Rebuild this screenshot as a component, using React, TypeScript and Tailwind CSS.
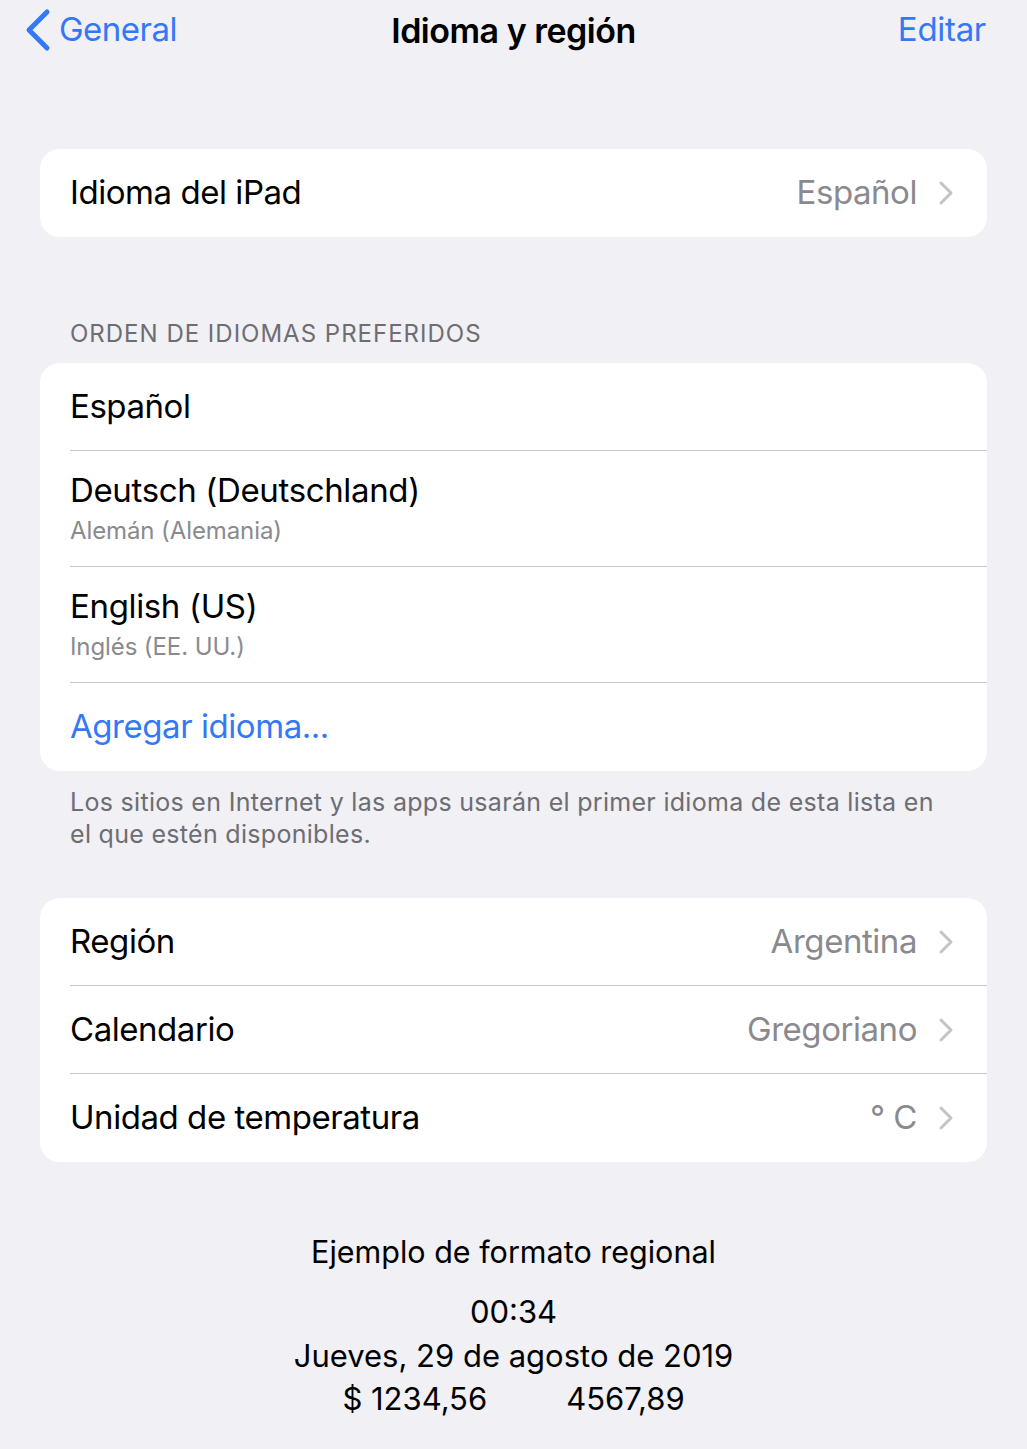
import type { ReactNode } from "react";

const font = { fontFamily: "Inter, 'Noto Sans', sans-serif" };

function Chevron() {
  return (
    <svg width="18" height="26" viewBox="0 0 18 26" className="shrink-0">
      <path
        d="M4 3 L14 13 L4 23"
        fill="none"
        stroke="#c4c4c7"
        strokeWidth="3"
        strokeLinecap="round"
        strokeLinejoin="round"
      />
    </svg>
  );
}

function Row({
  label,
  value,
  last,
}: {
  label: string;
  value?: string;
  last?: boolean;
}) {
  return (
    <div className="flex pl-[30px]">
      <div
        className={`flex h-[88px] flex-1 items-center justify-between pr-[32px] ${
          last ? "" : "border-b border-[#c8c7cc]"
        }`}
      >
        <span className="text-[33px] tracking-[-0.45px] text-black">{label}</span>
        {value && (
          <span className="flex items-center gap-[20px]">
            <span className="text-[33px] tracking-[-0.45px] text-[#8a8a8e]">{value}</span>
            <Chevron />
          </span>
        )}
      </div>
    </div>
  );
}

function LangRow({ title, sub }: { title: string; sub: string }) {
  return (
    <div className="flex pl-[30px]">
      <div className="flex h-[116px] flex-1 flex-col border-b border-[#c8c7cc] pt-[19px]">
        <span className="text-[33px] leading-[40px] tracking-[-0.35px] text-black">{title}</span>
        <span className="mt-[6px] text-[24px] leading-[30px] tracking-[-0.1px] text-[#8a8a8e]">{sub}</span>
      </div>
    </div>
  );
}

function Card({ children }: { children: ReactNode }) {
  return <div className="mx-[40px] overflow-hidden rounded-[20px] bg-white">{children}</div>;
}

export default function App() {
  return (
    <div className="min-h-[1449px] w-full bg-[#f0f0f5]" style={font}>
      {/* nav bar */}
      <div className="relative flex h-[60px] items-center justify-between px-[24px]">
        <div className="flex items-center gap-[7px] text-[#3478f6]">
          <svg width="28" height="44" viewBox="0 0 28 44">
            <path
              d="M23 4 L5 22 L23 40"
              fill="none"
              stroke="#3478f6"
              strokeWidth="5"
              strokeLinecap="round"
              strokeLinejoin="round"
            />
          </svg>
          <span className="text-[33px] tracking-[-0.5px]">General</span>
        </div>
        <span className="absolute left-1/2 -translate-x-1/2 text-[34px] font-semibold tracking-[-0.5px] text-black">
          Idioma y región
        </span>
        <span className="pr-[17px] text-[33px] tracking-[-0.3px] text-[#3478f6]">Editar</span>
      </div>

      <div className="pt-[89px]">
        <Card>
          <Row label="Idioma del iPad" value="Español" last />
        </Card>
      </div>

      <div className="pl-[70px] pt-[82px] pb-[14px] text-[24px] leading-[30px] tracking-[1px] text-[#6d6d72]">
        ORDEN DE IDIOMAS PREFERIDOS
      </div>

      <Card>
        <Row label="Español" />
        <LangRow title="Deutsch (Deutschland)" sub="Alemán (Alemania)" />
        <LangRow title="English (US)" sub="Inglés (EE. UU.)" />
        <div className="flex h-[88px] items-center pl-[30px] text-[33px] tracking-[-0.45px] text-[#3478f6]">
          Agregar idioma...
        </div>
      </Card>

      <div className="px-[70px] pt-[15px] text-[25px] leading-[32px] tracking-[0.3px] text-[#6d6d72]">
        Los sitios en Internet y las apps usarán el primer idioma de esta lista en
        <br />
        el que estén disponibles.
      </div>

      <div className="pt-[48px]">
        <Card>
          <Row label="Región" value="Argentina" />
          <Row label="Calendario" value="Gregoriano" />
          <Row label="Unidad de temperatura" value="° C" last />
        </Card>
      </div>

      <div className="flex flex-col items-center pt-[68px] text-black">
        <span className="text-[30.5px] leading-[44px]">Ejemplo de formato regional</span>
        <span className="mt-[16px] text-[31px] leading-[44px]">00:34</span>
        <span className="text-[31px] leading-[43px]">Jueves, 29 de agosto de 2019</span>
        <span className="flex gap-[79px] text-[31px] leading-[43px]">
          <span>$ 1234,56</span>
          <span>4567,89</span>
        </span>
      </div>
    </div>
  );
}
